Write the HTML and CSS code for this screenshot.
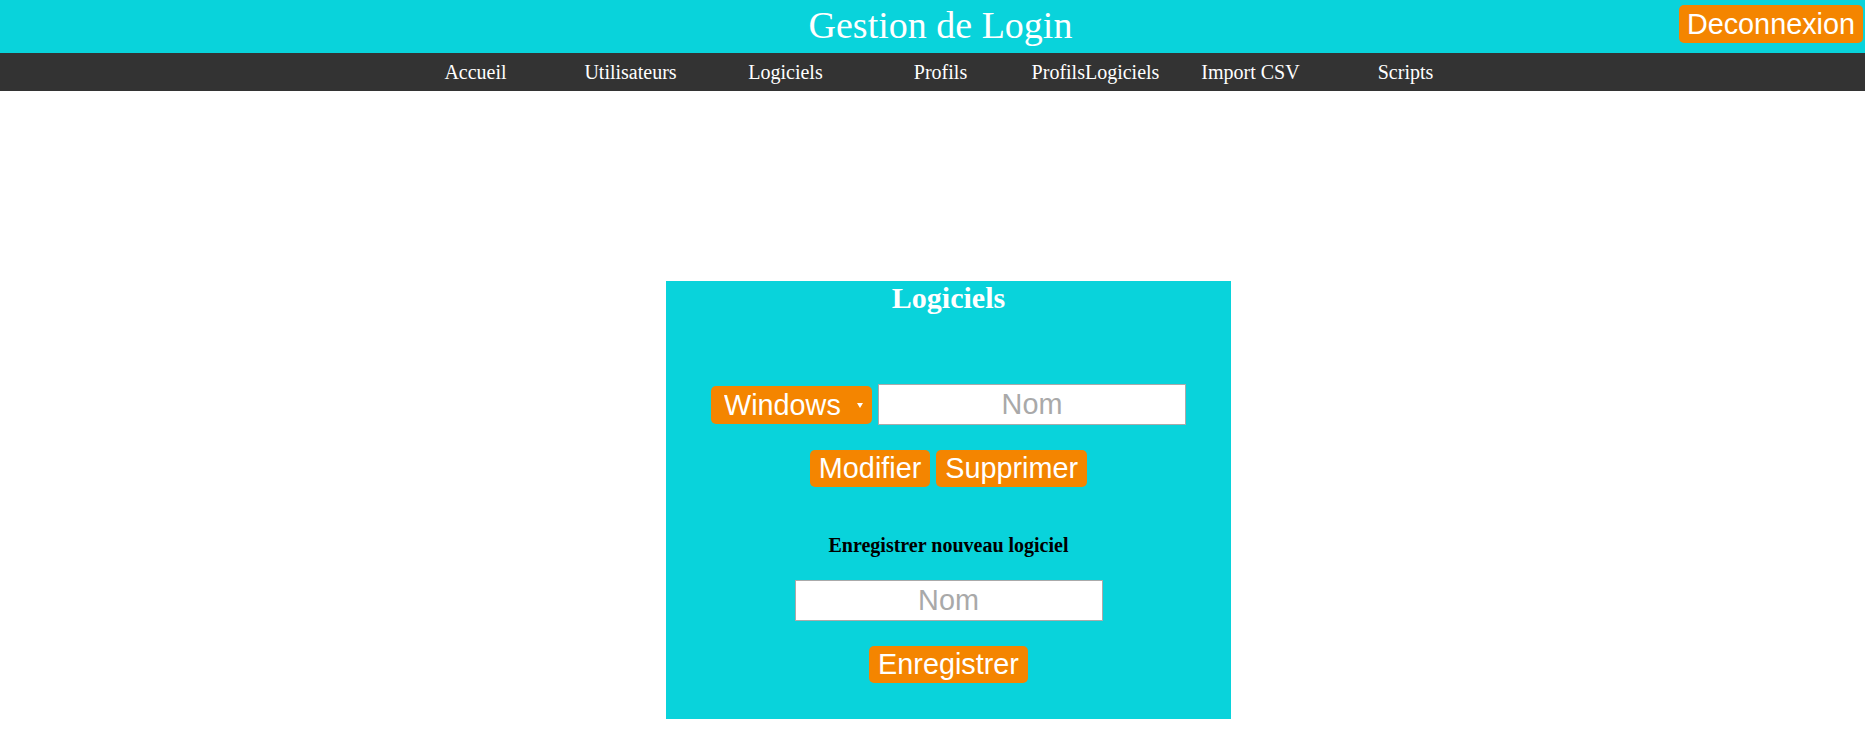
FILE: index.html
```html
<!DOCTYPE html>
<html lang="fr">
<head>
<meta charset="utf-8">
<title>Gestion de Login</title>
<link rel="stylesheet" href="styles.css">
</head>
<body>
<header class="top">
  <h1 class="top-title">Gestion de Login</h1>
  <button class="btn btn-logout" type="button">Deconnexion</button>
</header>
<nav class="menu">
  <a class="menu-item" href="#">Accueil</a>
  <a class="menu-item" href="#">Utilisateurs</a>
  <a class="menu-item" href="#">Logiciels</a>
  <a class="menu-item" href="#">Profils</a>
  <a class="menu-item" href="#">ProfilsLogiciels</a>
  <a class="menu-item" href="#">Import CSV</a>
  <a class="menu-item" href="#">Scripts</a>
</nav>
<main class="page">
  <section class="panel">
    <h2 class="panel-title">Logiciels</h2>
    <div class="row row-edit">
      <span class="select-wrap">
        <select class="select">
          <option>Windows</option>
        </select>
      </span>
      <input class="field" type="text" placeholder="Nom">
    </div>
    <div class="row row-actions">
      <button class="btn" type="button">Modifier</button>
      <button class="btn" type="button">Supprimer</button>
    </div>
    <h4 class="panel-sub">Enregistrer nouveau logiciel</h4>
    <div class="row row-new">
      <input class="field" type="text" placeholder="Nom">
    </div>
    <div class="row row-save">
      <button class="btn" type="button">Enregistrer</button>
    </div>
  </section>
</main>
</body>
</html>
```
FILE: styles.css
```css
html, body {
  margin: 0;
  padding: 0;
  background: #ffffff;
}

body {
  font-family: "Liberation Serif", "Times New Roman", serif;
}

.top {
  display: grid;
  grid-template-columns: 1fr auto 1fr;
  height: 53px;
  padding-left: 16px;
  background: #09d3db;
}

.top-title {
  grid-column: 2;
  margin: 0;
  font-weight: normal;
  font-size: 38px;
  line-height: 51px;
  color: #ffffff;
  white-space: nowrap;
}

.btn {
  height: 37px;
  font-family: "Liberation Sans", Arial, sans-serif;
  font-size: 28.8px;
  line-height: 33px;
  color: #ffffff;
  background: #f48500;
  border: 0;
  border-radius: 5px;
  padding: 0 9px;
  cursor: pointer;
}

.btn-logout {
  grid-column: 3;
  justify-self: end;
  align-self: start;
  height: 38px;
  margin: 5px 2px 0 0;
  padding: 0 8px;
}

.menu {
  display: flex;
  justify-content: center;
  height: 38px;
  padding-left: 16px;
  background: #333333;
  box-sizing: border-box;
}

.menu-item {
  width: 155px;
  padding-top: 8px;
  text-align: center;
  font-size: 20px;
  line-height: 23px;
  color: #ffffff;
  text-decoration: none;
}

.page {
  padding-left: 32px;
}

.panel {
  width: 565px;
  height: 438px;
  margin: 190px auto 0;
  background: #09d3db;
  text-align: center;
  box-sizing: border-box;
}

.panel-title {
  margin: 0;
  font-size: 30px;
  line-height: 34px;
  font-weight: bold;
  color: #ffffff;
}

.row {
  display: flex;
  justify-content: center;
  align-items: center;
  gap: 6px;
}

.row-edit {
  margin-top: 69px;
}

.row-actions {
  margin-top: 25px;
}

.panel-sub {
  margin: 47px 0 0;
  font-size: 20px;
  line-height: 23px;
  font-weight: bold;
  color: #000000;
}

.row-new {
  margin-top: 23px;
}

.row-save {
  margin-top: 25px;
}

.select-wrap {
  position: relative;
  display: inline-block;
}

.select-wrap::after {
  content: "";
  position: absolute;
  right: 9px;
  top: 17px;
  border-left: 3px solid transparent;
  border-right: 3px solid transparent;
  border-top: 5px solid #ffffff;
  pointer-events: none;
}

.select {
  appearance: none;
  -webkit-appearance: none;
  width: 161px;
  height: 38px;
  padding: 0 24px 0 13px;
  font-family: "Liberation Sans", Arial, sans-serif;
  font-size: 28.8px;
  color: #ffffff;
  background: #f48500;
  border: 0;
  border-radius: 5px;
  box-sizing: border-box;
}

.field {
  width: 308px;
  height: 41px;
  padding: 0 8px;
  font-family: "Liberation Sans", Arial, sans-serif;
  font-size: 28.8px;
  text-align: center;
  color: #333333;
  background: #ffffff;
  border: 1px solid #aaaaaa;
  box-sizing: border-box;
}

.field::placeholder {
  color: #a9a9a9;
}
```
